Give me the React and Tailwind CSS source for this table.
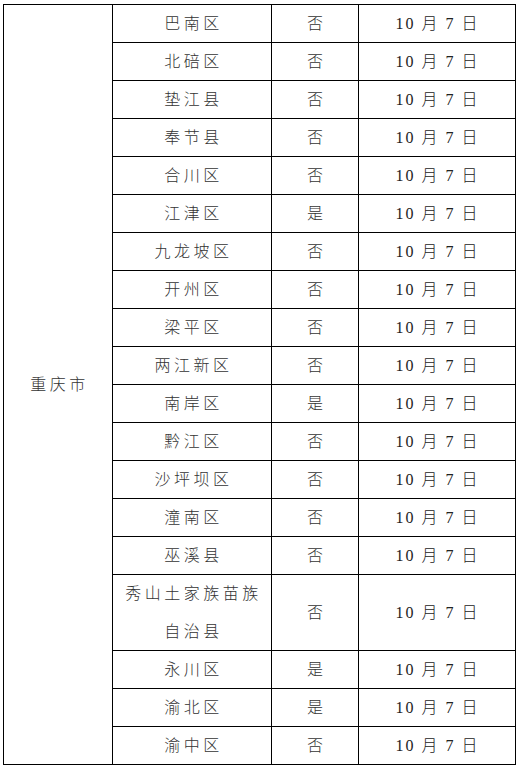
import React from "react";

const rows = [
  ["巴南区", "否"],
  ["北碚区", "否"],
  ["垫江县", "否"],
  ["奉节县", "否"],
  ["合川区", "否"],
  ["江津区", "是"],
  ["九龙坡区", "否"],
  ["开州区", "否"],
  ["梁平区", "否"],
  ["两江新区", "否"],
  ["南岸区", "是"],
  ["黔江区", "否"],
  ["沙坪坝区", "否"],
  ["潼南区", "否"],
  ["巫溪县", "否"],
  ["秀山土家族苗族|自治县", "否"],
  ["永川区", "是"],
  ["渝北区", "是"],
  ["渝中区", "否"],
];

const cjk = { fontFamily: '"Liberation Serif", "Noto Sans CJK SC", serif' };

export default function App() {
  return (
    <div className="bg-white w-[517px] h-[766px] pt-[4px] pl-[3px]" style={cjk}>
      <div className="grid grid-cols-[109px_159px_87px_157px] w-[513px] border-l border-t border-black text-[16px] text-[#333] font-light">
        <div
          className="border-r border-b border-black flex items-center justify-center tracking-[3.5px] pl-[3px]"
          style={{ gridRow: "1 / span 19" }}
        >
          重庆市
        </div>
        {rows.map(([name, yn], i) => {
          const tall = name.includes("|");
          const h = tall ? "h-[76px]" : "h-[38px]";
          return (
            <React.Fragment key={i}>
              <div className={`${h} border-r border-b border-black flex flex-col items-center justify-center tracking-[3.5px] pl-[3px] leading-[38px]`}>
                {name.split("|").map((p, j) => (
                  <span key={j}>{p}</span>
                ))}
              </div>
              <div className={`${h} border-r border-b border-black flex items-center justify-center`}>
                {yn}
              </div>
              <div className={`${h} border-r border-b border-black flex items-center justify-center tracking-[2px] pl-[1px] text-[#222]`}>
                10 月 7 日
              </div>
            </React.Fragment>
          );
        })}
      </div>
    </div>
  );
}
